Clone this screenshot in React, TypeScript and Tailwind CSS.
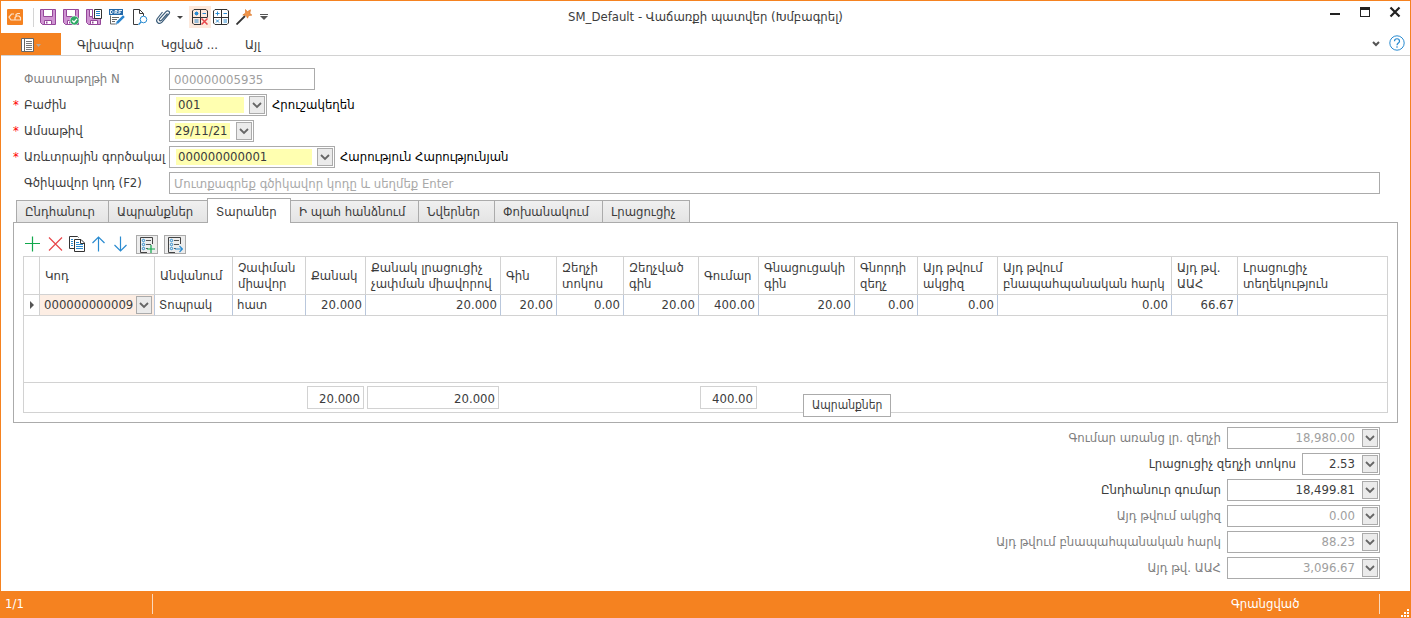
import React, { useState } from 'react';

type IconProps = { children: React.ReactNode; className?: string };

const Icon = ({ children, className = 'w-4 h-4' }: IconProps) => (
    <svg viewBox="0 0 16 16" fill="none" className={`shrink-0 ${className}`} aria-hidden="true">
        {children}
    </svg>
);

const Floppy = () => (
    <>
        <path d="M.5.5h15v15h-13l-2-2z" fill="#cf94d2" stroke="#95479a" />
        <path d="M3.500.5h9v7h-9z" fill="#fff" stroke="#95479a" />
        <path d="M4.500 11.500h7v4h-7z" fill="#fff" stroke="#95479a" />
        <path d="M6 12.500h1.500v2H6z" fill="#95479a" />
    </>
);

const DropButton = ({ label }: { label: string }) => (
    <button
        type="button"
        aria-label={label}
        className="flex h-[18px] w-4 shrink-0 items-center justify-center border border-[#ababab] bg-[#ebebeb]"
    >
        <svg viewBox="0 0 10 7" className="h-[7px] w-[10px]" fill="none" aria-hidden="true">
            <path d="M1 1L5 5L9 1" stroke="#666" strokeWidth="1.800" />
        </svg>
    </button>
);

type RequiredFieldProps = {
    id: string;
    label: string;
    value: string;
    boxClass: string;
    inputClass: string;
    text?: string;
};

const RequiredField = ({ id, label, value, boxClass, inputClass, text }: RequiredFieldProps) => (
    <div className="flex h-[22px] items-center">
        <label htmlFor={id} className="flex w-[156px] shrink-0 whitespace-nowrap">
            <span className="w-[11px] shrink-0 text-[#f00]">*</span>
            {label}
        </label>
        <div className={`flex h-[22px] shrink-0 items-center border border-[#ababab] pr-px ${boxClass}`}>
            <input id={id} defaultValue={value} className={`h-4 min-w-0 flex-1 bg-[#ffffb0] outline-none ${inputClass}`} />
            <DropButton label={label} />
        </div>
        {text && <span className="ml-[5px] whitespace-nowrap text-black">{text}</span>}
    </div>
);

const tabs = [
    { name: 'Ընդհանուր', width: 'w-[93px]' },
    { name: 'Ապրանքներ', width: 'w-[100px]' },
    { name: 'Տարաներ', width: 'w-[84px]' },
    { name: 'Ի պահ հանձնում', width: 'w-[129px]' },
    { name: 'Նվերներ', width: 'w-[77px]' },
    { name: 'Փոխանակում', width: 'w-[109px]' },
    { name: 'Լրացուցիչ', width: 'w-[88px]' },
];

const columns = [
    { lines: ['Կոդ'], width: 'w-[115px]', value: '000000000009' },
    { lines: ['Անվանում'], width: 'w-[78px]', value: 'Տոպրակ' },
    { lines: ['Չափման', 'միավոր'], width: 'w-[73px]', value: 'հատ' },
    { lines: ['Քանակ'], width: 'w-[60px]', value: '20.000', total: '20.000' },
    { lines: ['Քանակ լրացուցիչ', 'չափման միավորով'], width: 'w-[135px]', value: '20.000', total: '20.000' },
    { lines: ['Գին'], width: 'w-[56px]', value: '20.00' },
    { lines: ['Զեղչի', 'տոկոս'], width: 'w-[67px]', value: '0.00' },
    { lines: ['Զեղչված', 'գին'], width: 'w-[75px]', value: '20.00' },
    { lines: ['Գումար'], width: 'w-[60px]', value: '400.00', total: '400.00' },
    { lines: ['Գնացուցակի', 'գին'], width: 'w-[96px]', value: '20.00' },
    { lines: ['Գնորդի', 'զեղչ'], width: 'w-[63px]', value: '0.00' },
    { lines: ['Այդ թվում', 'ակցիզ'], width: 'w-[80px]', value: '0.00' },
    { lines: ['Այդ թվում', 'բնապահպանական հարկ'], width: 'w-[174px]', value: '0.00' },
    { lines: ['Այդ թվ.', 'ԱԱՀ'], width: 'w-[66px]', value: '66.67' },
    { lines: ['Լրացուցիչ', 'տեղեկություն'], width: '', value: '' },
];

const totals = [
    { id: 'subtotal', label: 'Գումար առանց լր. զեղչի', value: '18,980.00', locked: true, width: 'w-[153px]' },
    { id: 'discount', label: 'Լրացուցիչ զեղչի տոկոս', value: '2.53', locked: false, width: 'w-[78px]' },
    { id: 'total', label: 'Ընդհանուր գումար', value: '18,499.81', locked: false, width: 'w-[153px]' },
    { id: 'excise', label: 'Այդ թվում ակցիզ', value: '0.00', locked: true, width: 'w-[153px]' },
    { id: 'eco', label: 'Այդ թվում բնապահպանական հարկ', value: '88.23', locked: true, width: 'w-[153px]' },
    { id: 'vat', label: 'Այդ թվ. ԱԱՀ', value: '3,096.67', locked: true, width: 'w-[153px]' },
];

const TitleBar = () => (
    <header className="grid h-8 grid-cols-[1fr_auto_1fr] items-center">
        <div className="flex items-center pl-1.5">
            <Icon>
                <rect width="16" height="16" rx="1" fill="#f58220" />
                <path d="M7 5H4.500L2 8l2 3h9.500V8.500L12 7H9.500L8 8.500V11M9 7V5.500L10.500 4.500H13" stroke="#fde3cc" strokeWidth="1.200" />
            </Icon>
            <span className="mr-[6px] ml-[10px] h-[19px] w-px bg-[#d4d4d4]" />
            <div className="flex items-center gap-[7px]">
                <button type="button" aria-label="Save"><Icon><Floppy /></Icon></button>
                <button type="button" aria-label="Save and close">
                    <Icon>
                        <Floppy />
                        <circle cx="11.500" cy="11.500" r="4.500" fill="#2fa866" stroke="#fff" strokeWidth=".6" />
                        <path d="M9.200 11.500l1.800 1.800 3-3.400" stroke="#fff" strokeWidth="1.300" />
                    </Icon>
                </button>
                <button type="button" aria-label="Save and new">
                    <Icon>
                        <path d="M.5.5h6v9h8v6h-12l-2-2z" fill="#cf94d2" stroke="#95479a" />
                        <path d="M3.500.5h3v7h-3z" fill="#fff" stroke="#95479a" />
                        <path d="M4.500 11.500h7v4h-7z" fill="#fff" stroke="#95479a" />
                        <path d="M6 12.500h1.500v2H6z" fill="#95479a" />
                        <path d="M8.500.5h7v9h-7z" fill="#fff" stroke="#333" />
                        <path d="M10 2.500h4M10 4.500h4M10 6.500h4" stroke="#1f82c8" />
                    </Icon>
                </button>
                <button type="button" aria-label="Save draft">
                    <Icon>
                        <path d="M0 0h14v6H0z" fill="#2368a8" />
                        <path d="M1.500 1.500v3h1.500l.8-.8V2.300L3 1.500zM6 5V1.500h2v1.500H6.500L8.500 5M10 5V1.500h3M10 3.200h2" stroke="#fff" strokeWidth=".9" />
                        <path d="M1.500 6.500V15H8M3 8.500h7M3 10.500h5M3 12.500h3" stroke="#666" />
                        <path d="M14 6l2 2-6.500 6.500-3 1 1-3z" fill="#2d86cf" stroke="#fff" strokeWidth=".4" />
                    </Icon>
                </button>
                <button type="button" aria-label="Preview">
                    <Icon>
                        <path d="M6 15.500H1.500V.500h6l4 4V7M7.500.500v4h4" stroke="#3c3c3c" />
                        <circle cx="11.500" cy="10.500" r="3.300" fill="#fff" stroke="#2a8bd0" />
                        <path d="M9 13L6.500 15.700" stroke="#2a8bd0" strokeWidth="1.300" />
                    </Icon>
                </button>
                <button type="button" aria-label="Attach">
                    <Icon>
                        <path d="M12.500 4.500l-6 6.800c-1.300 1.200-3-.2-1.800-1.700l6.300-7c1.800-1.900 4.600.2 3 2.400l-7 8.200c-2.700 2.800-7-.2-4.600-3.700L7.500 3" stroke="#3b5c79" strokeWidth="1.200" />
                    </Icon>
                </button>
            </div>
            <svg viewBox="0 0 6 3" className="ml-[6px] h-[3px] w-[6px]" aria-hidden="true"><path d="M0 0h6L3 3z" fill="#444" /></svg>
            <button type="button" aria-label="Clear calculation" className="ml-[6px] flex h-[22px] w-[22px] items-center justify-center bg-[#fde9dc]">
                <Icon>
                    <path d="M9 15.500H2L.5 14V2L2 .5h12L15.500 2v6M8.500 0v15.500M0 8.500h15.500" stroke="#333" />
                    <path d="M4.500 2.500v4M2.500 4.500h4M3 3l3 3M6 3L3 6M10.500 4.500h3.500M2.500 11h4M2.500 13h4" stroke="#2a8bd0" />
                    <path d="M9 9h7v7H9z" fill="#fde9dc" />
                    <path d="M9.500 9.500l6 6M15.500 9.500l-6 6" stroke="#e8474b" strokeWidth="1.500" />
                </Icon>
            </button>
            <div className="ml-[2px] flex items-center gap-[7px]">
                <button type="button" aria-label="Calculate">
                    <Icon>
                        <path d="M2 .5h12L15.500 2v12L14 15.500H2L.5 14V2zM8.500 0v16M0 8.500h16" stroke="#333" />
                        <path d="M4.500 2.500v4M2.500 4.500h4M10.500 4.500h3.500M3 10.500l3 3M6 10.500l-3 3M10.500 11h3.500M10.500 13h3.500" stroke="#2a8bd0" />
                    </Icon>
                </button>
                <button type="button" aria-label="Wizard">
                    <Icon>
                        <path d="M.500 15.500L9 7" stroke="#333" strokeWidth="1.800" />
                        <path d="M9.500.500l1.800 2.200L14.500.800l-.6 3.400 2 2-3.200.3-1.200 2.700-1.300-2.700-3.400-.5 2.800-2z" fill="#f0954a" stroke="#d86f1d" strokeWidth=".6" />
                    </Icon>
                </button>
            </div>
            <svg viewBox="0 0 8 6" className="ml-[8px] h-[6px] w-[8px]" aria-hidden="true"><path d="M0 0h8v1H0zM0 2h8L4 6z" fill="#555" /></svg>
        </div>
        <h1 className="whitespace-nowrap">SM_Default - Վաճառքի պատվեր (Խմբագրել)</h1>
        <div className="flex items-center justify-end gap-[18px] self-start pt-[5px] pr-[9px]">
            <button type="button" aria-label="Minimize">
                <svg viewBox="0 0 12 12" className="h-3 w-3"><path d="M1 7h10v2H1z" fill="#222" /></svg>
            </button>
            <button type="button" aria-label="Maximize">
                <svg viewBox="0 0 12 12" className="h-3 w-3"><path d="M1 1h10v10H1zM2 4v6h8V4z" fill="#222" fillRule="evenodd" /></svg>
            </button>
            <button type="button" aria-label="Close">
                <svg viewBox="0 0 12 12" className="h-3 w-3"><path d="M1.500 1.500l9 9M10.500 1.500l-9 9" stroke="#222" strokeWidth="2.200" /></svg>
            </button>
        </div>
    </header>
);

const RibbonTabs = () => (
    <nav className="flex h-[23px] items-stretch border-b border-[#d2d2d2]">
        <button type="button" aria-label="File" className="flex w-[60px] items-center bg-[#f58220] pt-0.5 pl-5">
            <svg viewBox="0 0 13 14" className="h-[14px] w-[13px]" fill="none" aria-hidden="true">
                <path d="M.5.500h12v13H.500z" fill="#fff" stroke="#666" />
                <path d="M3.500 0v14" stroke="#666" />
                <path d="M5 3.500h6M5 5.500h6M5 7.500h6M5 9.500h6M5 11.500h6" stroke="#777" />
            </svg>
            <svg viewBox="0 0 5 3" className="ml-[2px] h-[3px] w-[5px]" aria-hidden="true"><path d="M0 0h5L2.500 3z" fill="#b5a79b" /></svg>
        </button>
        <div className="flex items-center gap-[27px] pt-0.5 pl-4">
            <button type="button" className="whitespace-nowrap">Գլխավոր</button>
            <button type="button" className="whitespace-nowrap">Կցված ...</button>
            <button type="button" className="whitespace-nowrap">Այլ</button>
        </div>
        <div className="ml-auto flex items-start gap-[9px] pt-0.5 pr-[5px]">
            <button type="button" aria-label="Collapse ribbon" className="pt-[6px]">
                <svg viewBox="0 0 8 6" className="h-[6px] w-[8px]" fill="none"><path d="M1 1l3 3 3-3" stroke="#555" strokeWidth="2" /></svg>
            </button>
            <button type="button" aria-label="Help">
                <Icon>
                    <circle cx="8" cy="8" r="7.200" stroke="#2a8bd0" />
                    <path d="M5.500 6.200c0-3.300 5-3.300 5 0 0 1.800-2.500 1.900-2.500 4M8 11.300v1.400" stroke="#2a8bd0" strokeWidth="1.200" />
                </Icon>
            </button>
        </div>
    </nav>
);

const ListLines = () => (
    <>
        <path d="M8 15.500H1.500V.500h12V7" stroke="#444" />
        <path d="M7 3.500h5M7 7.500h5M7 11.500h2" stroke="#555" />
        <circle cx="4.500" cy="3.500" r="1.200" stroke="#2a8bd0" />
        <circle cx="4.500" cy="7.500" r="1.200" stroke="#2a8bd0" />
        <circle cx="4.500" cy="11.500" r="1.200" stroke="#2a8bd0" />
    </>
);

const GridToolbar = () => (
    <div className="mb-[2px] ml-[2px] flex h-[19px] items-start gap-[6px]">
        <button type="button" aria-label="Add" className="pt-px">
            <Icon><path d="M7.500.5v15M0 7.500h15" stroke="#12a84c" strokeWidth="1.200" /></Icon>
        </button>
        <button type="button" aria-label="Delete" className="pt-px">
            <Icon><path d="M2 1.500l13 13M15 1.500l-13 13" stroke="#e8474b" strokeWidth="1.200" /></Icon>
        </button>
        <button type="button" aria-label="Copy" className="pt-px">
            <Icon>
                <path d="M5 12.500H.500V.500h8l1 1" stroke="#333" />
                <path d="M5.500 3.500h6.500l3.500 3.500v8.500h-10z" fill="#fff" stroke="#333" />
                <path d="M11.500 3.500v4h4" stroke="#333" />
                <path d="M2 3.500h2M2 5.500h2M2 7.500h2M2 9.500h2M7 6.500h3M7 8.500h7M7 10.500h7M7 12.500h7" stroke="#2a8bd0" />
            </Icon>
        </button>
        <button type="button" aria-label="Move up" className="pt-px">
            <Icon><path d="M7.500 15.500V1M1.500 7l6-6 6 6" stroke="#2a8bd0" strokeWidth="1.200" /></Icon>
        </button>
        <button type="button" aria-label="Move down" className="pt-px">
            <Icon><path d="M7.500.500V15M1.500 9l6 6 6-6" stroke="#2a8bd0" strokeWidth="1.200" /></Icon>
        </button>
        <button type="button" aria-label="Add from list" className="ml-px flex h-[19px] w-[22px] items-center justify-center border border-[#ababab] bg-[#ededed]">
            <Icon>
                <ListLines />
                <path d="M12 8v8M8 12h8" stroke="#12a84c" strokeWidth="1.200" />
            </Icon>
        </button>
        <button type="button" aria-label="Open list" className="flex h-[19px] w-[22px] items-center justify-center border border-[#ababab] bg-[#ededed]">
            <Icon>
                <ListLines />
                <path d="M8 12h7.500M12.500 9l3 3-3 3" stroke="#2a8bd0" strokeWidth="1.200" />
            </Icon>
        </button>
    </div>
);

const ItemsGrid = () => (
    <table className="w-full table-fixed border-separate border-spacing-0 border-t border-b border-l border-[#d2d2d2]">
        <thead>
            <tr className="h-[38px]">
                <th className="w-4 border-r border-b border-[#d2d2d2]" />
                {columns.map((col) => (
                    <th
                        key={col.lines.join(' ')}
                        scope="col"
                        className={`border-r border-b border-[#d2d2d2] py-0 pr-0 pl-[5px] text-left align-middle leading-4 font-normal whitespace-nowrap ${col.width}`}
                    >
                        {col.lines.map((line) => (
                            <span key={line} className="block">{line}</span>
                        ))}
                    </th>
                ))}
            </tr>
        </thead>
        <tbody>
            <tr className="h-[21px]">
                <td className="border-r border-b border-[#d2d2d2] p-0">
                    <svg viewBox="0 0 4 8" className="ml-[6px] h-[8px] w-[4px]" aria-hidden="true"><path d="M0 0l4 4-4 4z" fill="#555" /></svg>
                </td>
                {columns.map((col, i) =>
                    i === 0 ? (
                        <td key="code" className="border-r border-b border-r-[#b9c7dc] border-b-[#d2d2d2] bg-[#fdeee4] p-0">
                            <div className="flex h-5 items-center pr-[2px]">
                                <input aria-label="Կոդ" defaultValue={col.value} className="min-w-0 flex-1 bg-transparent pl-1 outline-none" />
                                <DropButton label="Կոդ" />
                            </div>
                        </td>
                    ) : (
                        <td
                            key={i}
                            className={`border-r border-b border-r-[#b9c7dc] border-b-[#d2d2d2] py-0 leading-5 last:border-r-[#d2d2d2] ${i > 2 ? 'pr-[3px] text-right' : 'pl-1'}`}
                        >
                            {col.value}
                        </td>
                    )
                )}
            </tr>
            <tr className="h-[67px]">
                <td colSpan={16} className="border-r border-b border-[#d2d2d2]" />
            </tr>
        </tbody>
        <tfoot>
            <tr className="h-[29px]">
                <td className="p-0" />
                {columns.map((col, i) => (
                    <td key={i} className="border-[#d2d2d2] p-0 last:border-r">
                        {col.total && (
                            <div className="mr-0.5 ml-px h-[23px] border border-[#d2d2d2] pr-[3px] text-right leading-[23px]">{col.total}</div>
                        )}
                    </td>
                ))}
            </tr>
        </tfoot>
    </table>
);

const App: React.FC = () => {
    const [activeTab, setActiveTab] = useState('Տարաներ');

    return (
        <div className="flex min-h-screen flex-col border border-[#f58220] bg-white font-['DejaVu_Sans_Condensed','DejaVu_Sans',sans-serif] text-[13px] leading-4 text-[#3c3c3c]">
            <TitleBar />
            <RibbonTabs />
            <main className="px-3 pt-3">
                <form className="flex flex-col gap-1 pr-[18px]">
                    <div className="flex h-[22px] items-center text-[#808080]">
                        <label htmlFor="doc" className="w-[156px] shrink-0 pl-[11px]">Փաստաթղթի N</label>
                        <input id="doc" readOnly value="000000005935" className="h-[22px] w-[146px] border border-[#ababab] px-1 text-[#a0a0a0] outline-none" />
                    </div>
                    <RequiredField id="section" label="Բաժին" value="001" boxClass="w-[98px] pl-[6px]" inputClass="mr-[5px] pl-[2px]" text="Հրուշակեղեն" />
                    <RequiredField id="date" label="Ամսաթիվ" value="29/11/21" boxClass="w-[85px] pl-[5px]" inputClass="mr-[6px]" />
                    <RequiredField id="agent" label="Առևտրային գործակալ" value="000000000001" boxClass="w-[166px] pl-[6px]" inputClass="mr-[5px] pl-[2px]" text="Հարություն Հարությունյան" />
                    <div className="flex h-[22px] items-center">
                        <label htmlFor="barcode" className="w-[156px] shrink-0 pl-[11px] whitespace-nowrap">Գծիկավոր կոդ (F2)</label>
                        <input
                            id="barcode"
                            placeholder="Մուտքագրեք գծիկավոր կոդը և սեղմեք Enter"
                            className="h-[22px] min-w-0 flex-1 border border-[#ababab] px-1 outline-none placeholder:text-[#a9a9a9]"
                        />
                    </div>
                </form>

                <div role="tablist" className="mt-1 flex h-6 items-end pl-[3px]">
                    {tabs.map((tab) => {
                        const active = tab.name === activeTab;
                        return (
                            <button
                                key={tab.name}
                                type="button"
                                role="tab"
                                aria-selected={active}
                                onClick={() => setActiveTab(tab.name)}
                                className={`-mr-px border border-[#ababab] pl-[8px] text-left whitespace-nowrap ${tab.width} ${active
                                        ? 'z-10 -mb-px h-[25px] border-b-0 bg-white pt-0.5'
                                        : 'h-[22px] border-b-0 bg-gradient-to-b from-[#f0f0f0] to-[#e4e4e4]'
                                    }`}
                            >
                                {tab.name}
                            </button>
                        );
                    })}
                </div>

                <section className="relative border border-[#ababab] px-[9px] pt-3 pb-[9px]">
                    <GridToolbar />
                    <ItemsGrid />
                    <div role="tooltip" className="absolute top-[171px] left-[789px] h-[23px] border border-[#ababab] bg-white px-[8px] text-[12px] leading-[21px]">
                        Ապրանքներ
                    </div>
                </section>

                <section className="flex flex-col gap-1 pt-1 pr-[18px] pb-3">
                    {totals.map((row) => (
                        <div key={row.id} className={`flex h-[22px] items-center justify-end gap-[6px] ${row.locked ? 'text-[#808080]' : ''}`}>
                            <label htmlFor={row.id} className="whitespace-nowrap">{row.label}</label>
                            <div className={`flex h-[22px] items-center gap-[7px] border border-[#ababab] pr-px ${row.width}`}>
                                <input
                                    id={row.id}
                                    readOnly={row.locked}
                                    defaultValue={row.value}
                                    className={`min-w-0 flex-1 bg-transparent text-right outline-none ${row.locked ? 'text-[#a0a0a0]' : ''}`}
                                />
                                <DropButton label={row.label} />
                            </div>
                        </div>
                    ))}
                </section>
            </main>

            <footer className="mt-auto flex h-[26px] items-center bg-[#f58220] text-white">
                <span className="w-[151px] pl-1">1/1</span>
                <span className="h-5 w-px bg-[#fbd9bd]" />
                <span className="ml-auto w-[148px]">Գրանցված</span>
                <span className="h-5 w-px bg-[#fbd9bd]" />
                <svg viewBox="0 0 8 8" className="mr-px ml-[21px] h-2 w-2 self-end" aria-hidden="true">
                    <path d="M6 0h2v2H6zM3 3h2v2H3zM6 3h2v2H6zM0 6h2v2H0zM3 6h2v2H3zM6 6h2v2H6z" fill="#fff" />
                </svg>
            </footer>
        </div>
    );
};

export default App;
